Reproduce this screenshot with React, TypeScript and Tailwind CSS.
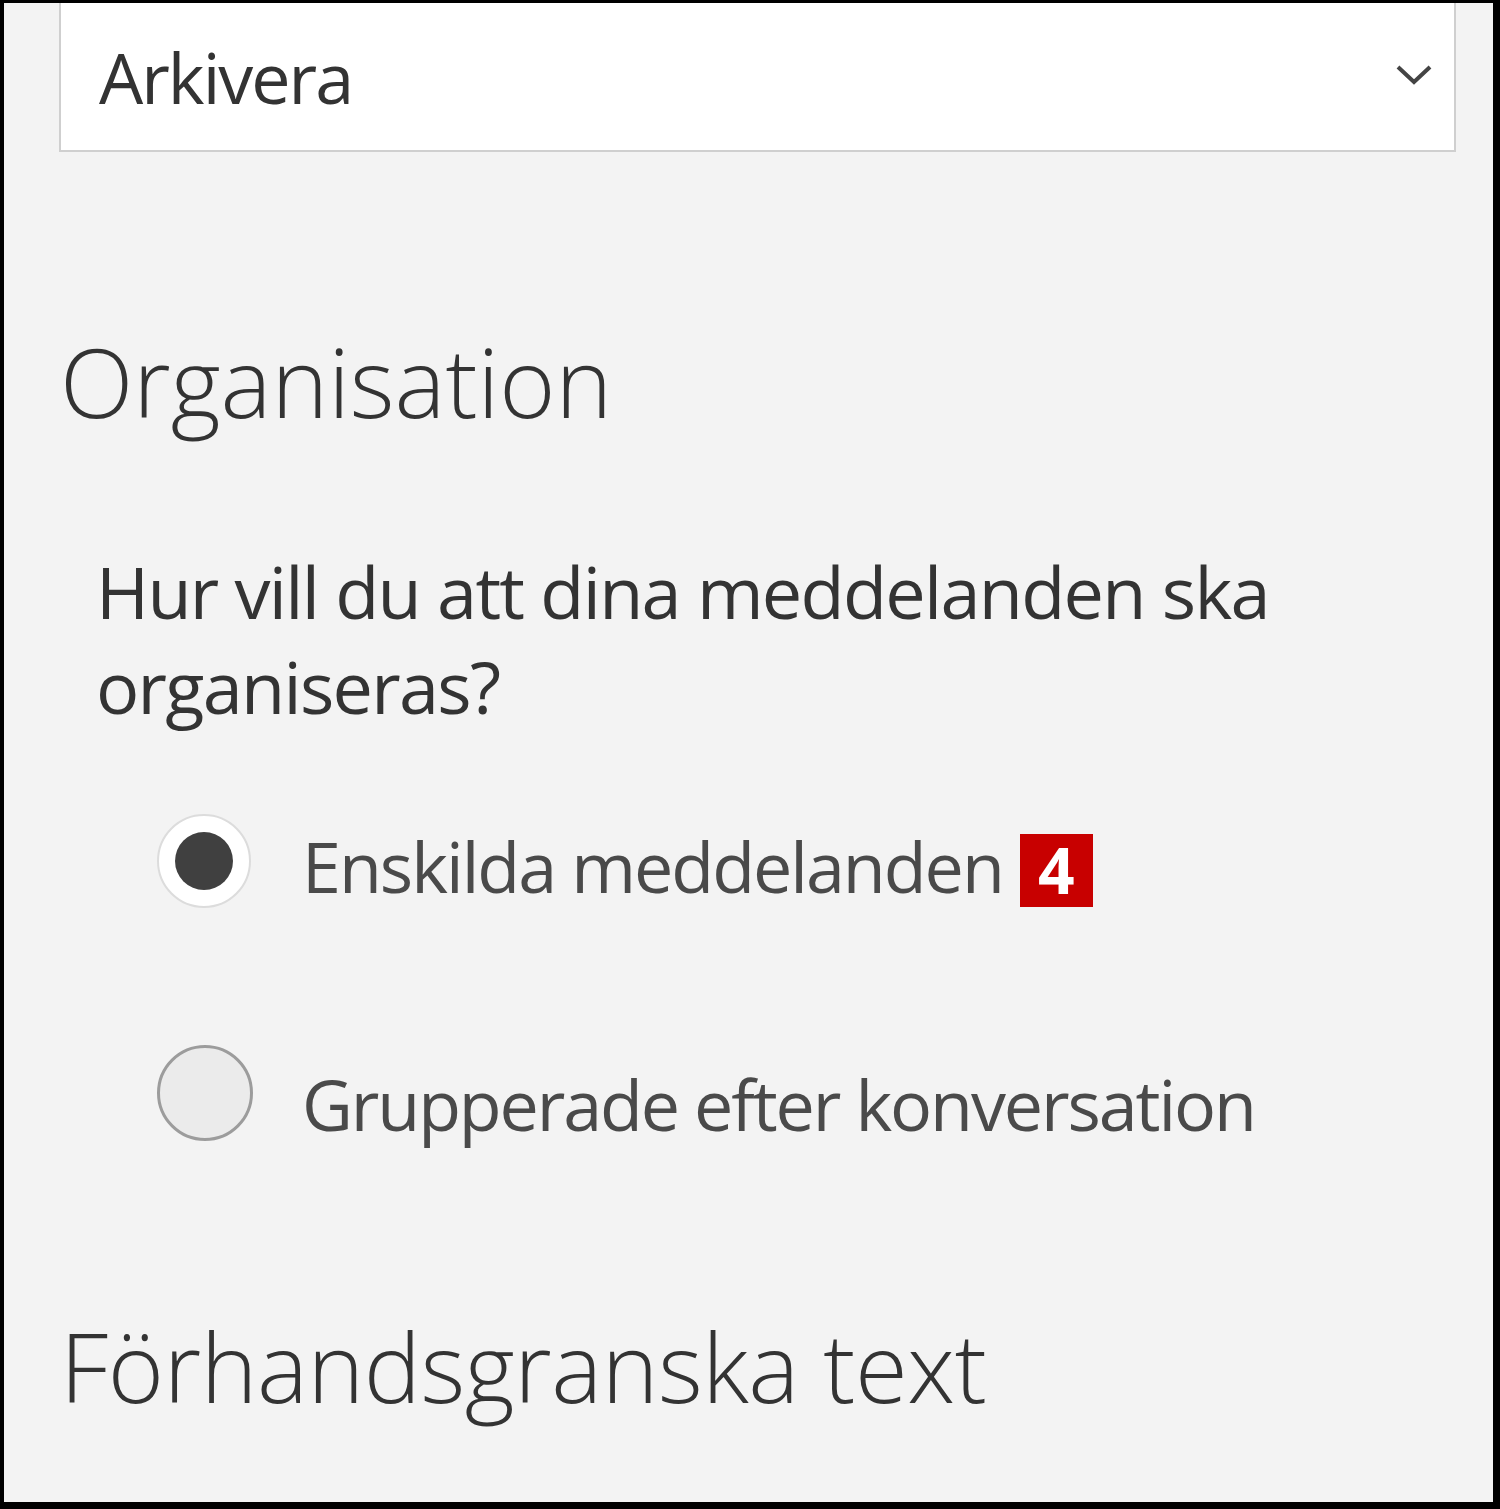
const font = { fontFamily: '"Open Sans", "Noto Sans", sans-serif' };

const Radio = ({ checked }: { checked: boolean }) =>
  checked ? (
    <span className="flex size-[94px] shrink-0 items-center justify-center rounded-full border-2 border-[#dcdcdc] bg-white">
      <span className="size-[58px] rounded-full bg-[#404040]" />
    </span>
  ) : (
    <span className="size-[96px] shrink-0 rounded-full border-[3px] border-[#9c9c9c] bg-[#ebebeb]" />
  );

export default function App() {
  return (
    <div className="h-[1509px] w-[1500px] bg-black pb-[7px] pl-[4px] pr-[7px] pt-[3px]">
      <div className="h-full w-full overflow-hidden bg-[#f3f3f3] pl-[55px] pr-[37px] text-[#333]" style={font}>
        <div className="flex h-[149px] items-center justify-between border-x-2 border-b-2 border-[#cfcfcf] bg-white pl-[38px] pr-[20px]">
          <span className="text-[70px] leading-none tracking-[-2px]">Arkivera</span>
          <svg width="40" height="28" viewBox="0 0 40 28" className="mb-[6px]">
            <polyline points="4,7 20,22 36,7" fill="none" stroke="#444" strokeWidth="4" />
          </svg>
        </div>

        <h2 className="ml-[1px] mt-[181px] text-[96px] font-light leading-none tracking-[0px]">Organisation</h2>

        <p className="ml-[37px] mt-[115px] text-[72px] leading-[95px] tracking-[-1.7px]">
          Hur vill du att dina meddelanden ska
          <br />
          organiseras?
        </p>

        <div className="ml-[98px] mt-[80px] flex flex-col gap-[137px]">
          <label className="flex items-center">
            <Radio checked />
            <span className="ml-[51px] mt-[10px] text-[70px] leading-none tracking-[-2px] text-[#4a4a4a]">
              Enskilda meddelanden
            </span>
            <span className="ml-[17px] mt-[18px] flex size-[73px] items-center justify-center bg-[#c80000] text-[64px] font-bold leading-none text-white">
              4
            </span>
          </label>
          <label className="flex items-center">
            <Radio checked={false} />
            <span className="ml-[49px] mt-[21px] text-[70px] leading-none tracking-[-2.1px] text-[#4a4a4a]">
              Grupperade efter konversation
            </span>
          </label>
        </div>

        <h2 className="ml-[1px] mt-[177px] text-[96px] font-light leading-none tracking-[-0.4px]">Förhandsgranska text</h2>
      </div>
    </div>
  );
}
